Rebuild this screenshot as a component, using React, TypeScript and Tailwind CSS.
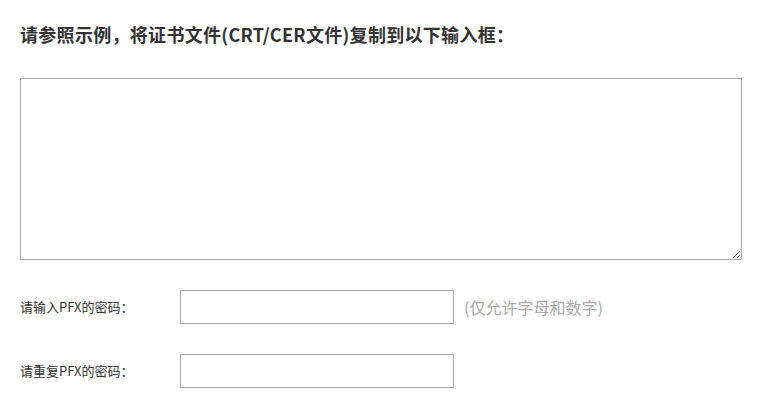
export default function App() {
  const font = { fontFamily: '"Microsoft YaHei", "Noto Sans CJK SC", sans-serif' };
  return (
    <div className="min-h-[419px] w-[764px] bg-white px-5 pt-[22px]" style={font}>
      <h1 className="text-[18px] font-bold leading-[24px] tracking-[0.3px] text-[#333]">
        请参照示例，将证书文件(CRT/CER文件)复制到以下输入框：
      </h1>
      <textarea className="mt-8 block h-[182px] w-[722px] border border-[#a9a9a9] outline-none" />
      <div className="mt-[30px] flex items-center">
        <label className="w-[160px] text-[13px] text-[#333]">请输入PFX的密码：</label>
        <input type="password" className="h-[34px] w-[274px] border border-[#a9a9a9] outline-none" />
        <span className="ml-[10px] text-[16px] text-[#aaa]">(仅允许字母和数字)</span>
      </div>
      <div className="mt-[30px] flex items-center">
        <label className="w-[160px] text-[13px] text-[#333]">请重复PFX的密码：</label>
        <input type="password" className="h-[34px] w-[274px] border border-[#a9a9a9] outline-none" />
      </div>
    </div>
  );
}
